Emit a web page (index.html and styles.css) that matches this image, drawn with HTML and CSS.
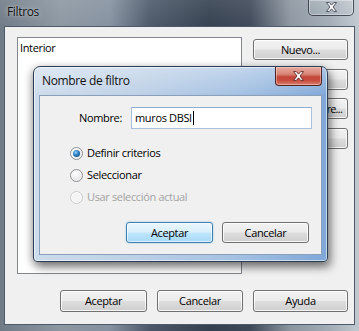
FILE: index.html
```html
<!DOCTYPE html>
<html>
<head>
<meta charset="utf-8">
<link rel="stylesheet" href="styles.css">
</head>
<body>
<div class="window">
  <div class="titlebar">
    <span class="title">Filtros</span>
    <div class="close-outer">
      <svg class="x" width="13" height="10" viewBox="0 0 10 9"><polygon points="0.5,0.5 3,0.5 5,2.8 7,0.5 9.5,0.5 6.4,4.5 9.5,8.5 7,8.5 5,6.2 3,8.5 0.5,8.5 3.6,4.5" fill="#fff" stroke="#3b4250" stroke-width="0.8" stroke-linejoin="round"/></svg>
    </div>
  </div>
  <div class="client">
    <div class="main">
      <div class="listbox"><div class="item">Interior</div></div>
      <div class="side">
        <button class="btn">Nuevo...</button>
        <button class="btn">Duplicar</button>
        <button class="btn"><span class="tight">Cambiar nombre...</span></button>
        <button class="btn">Suprimir</button>
      </div>
    </div>
    <div class="footer">
      <button class="btn w87">Aceptar</button>
      <button class="btn w86">Cancelar</button>
      <button class="btn w95">Ayuda</button>
    </div>
  </div>
</div>

<div class="dialog">
  <div class="dtitle">
    <span class="dtitle-text">Nombre de filtro</span>
    <div class="close-red">
      <svg class="x" width="11" height="10" viewBox="0 0 10 9"><polygon points="0.5,0.5 3,0.5 5,2.8 7,0.5 9.5,0.5 6.4,4.5 9.5,8.5 7,8.5 5,6.2 3,8.5 0.5,8.5 3.6,4.5" fill="#fff" stroke="#5a2020" stroke-width="0.8" stroke-linejoin="round"/></svg>
    </div>
  </div>
  <div class="dclient">
    <div class="namerow">
      <label class="lbl">Nombre:</label>
      <div class="input">muros DBSI<span class="caret"></span></div>
    </div>
    <div class="radios">
      <div class="radio-row"><span class="radio checked"></span><span>Definir criterios</span></div>
      <div class="radio-row"><span class="radio"></span><span>Seleccionar</span></div>
      <div class="radio-row disabled"><span class="radio"></span><span>Usar selección actual</span></div>
    </div>
    <div class="dbuttons">
      <button class="btn default w87">Aceptar</button>
      <button class="btn w87">Cancelar</button>
    </div>
  </div>
</div>
</body>
</html>
```

FILE: styles.css
```css
html, body {
  margin: 0;
  padding: 0;
}
body {
  width: 359px;
  height: 331px;
  overflow: hidden;
  position: relative;
  font-family: "Open Sans", "Noto Sans", sans-serif;
  font-size: 11px;
  letter-spacing: -0.35px;
  color: #000;
  background:
    linear-gradient(to bottom, rgba(255,255,255,0.10), rgba(0,0,0,0) 30px),
    linear-gradient(to right, #6f7b87 0px, #8c97a2 60px, #8591a0 110px, #4c5869 150px, #34404f 210px, #3d4858 250px, #8b959f 290px, #a3adb7 330px, #c1c9d0 359px);
}
.window {
  width: 359px;
  height: 331px;
  display: flex;
  flex-direction: column;
}
.titlebar {
  height: 26px;
  display: flex;
  justify-content: space-between;
  align-items: flex-start;
  flex: none;
}
.title {
  margin-left: 7px;
  margin-top: 5px;
  font-size: 12px;
  line-height: 14px;
  color: #111;
  text-shadow: 0 0 6px rgba(255,255,255,0.55), 0 0 2px rgba(255,255,255,0.4);
}
.close-outer {
  width: 44px;
  height: 15px;
  margin-right: 5px;
  border: 1px solid rgba(20,28,40,0.7);
  border-top: none;
  border-radius: 0 0 5px 5px;
  box-shadow: inset 0 0 0 1px rgba(255,255,255,0.35);
  background: linear-gradient(to bottom, rgba(255,255,255,0.10), rgba(255,255,255,0.02));
  display: flex;
  align-items: center;
  justify-content: center;
}
.close-outer .x {
  margin-top: -1px;
}
.client {
  margin: 0 4px;
  height: 297px;
  border: 1px solid #4d5a6a;
  background: #f0f0f0;
  display: flex;
  flex-direction: column;
  flex: none;
}
.main {
  display: flex;
  padding: 10px 0 0 12px;
  gap: 11px;
}
.listbox {
  width: 223px;
  height: 235px;
  border: 1px solid #828790;
  background: #fff;
}
.item {
  padding: 3px 0 0 2px;
  font-size: 11px;
  line-height: 14px;
}
.side {
  display: flex;
  flex-direction: column;
  gap: 8.6px;
  padding-top: 2px;
}
.side .btn {
  width: 95px;
}
.btn {
  height: 21px;
  padding: 0;
  border: 1px solid #707070;
  border-radius: 3px;
  background: linear-gradient(to bottom, #f2f2f2 0%, #ebebeb 48%, #dddddd 52%, #cfcfcf 100%);
  box-shadow: inset 0 0 0 1px rgba(255,255,255,0.8);
  font-family: "Open Sans", "Noto Sans", sans-serif;
  font-size: 11px;
  letter-spacing: -0.35px;
  color: #000;
  line-height: 18px;
  white-space: nowrap;
}
.tight {
  letter-spacing: -0.75px;
}
.w87 { width: 87px; }
.w86 { width: 86px; }
.w95 { width: 95px; }
.footer {
  display: flex;
  justify-content: flex-end;
  gap: 10px;
  padding-right: 6px;
  margin-top: 16px;
}
.footer .btn {
  height: 22px;
}

/* Inner dialog (overlays the main window) */
.dialog {
  position: absolute;
  left: 33px;
  top: 66px;
  width: 293px;
  height: 194px;
  border: 1px solid #2b3e55;
  border-radius: 7px 7px 4px 4px;
  background:
    linear-gradient(to bottom, rgba(255,255,255,0.35), rgba(255,255,255,0.05) 26px, rgba(255,255,255,0) 28px),
    linear-gradient(to right, #cddcec 0%, #bcd0e6 35%, #a3c0e2 70%, #7fa7d8 100%);
  box-shadow: inset 0 0 0 1px rgba(255,255,255,0.55), 3px 5px 10px rgba(0,0,0,0.45), -2px 2px 8px rgba(0,0,0,0.25);
  display: flex;
  flex-direction: column;
}
.dtitle {
  height: 28px;
  display: flex;
  justify-content: space-between;
  align-items: flex-start;
  flex: none;
}
.dtitle-text {
  margin-left: 8px;
  margin-top: 7px;
  font-size: 12px;
  line-height: 14px;
  color: #111;
}
.close-red {
  width: 45px;
  height: 18px;
  margin-right: 5px;
  border: 1px solid #4f2424;
  border-top: none;
  border-radius: 0 0 4px 4px;
  background: linear-gradient(to bottom, #e6aa9f 0%, #d88576 40%, #c2463a 55%, #c84d40 75%, #d9806f 100%);
  box-shadow: inset 0 0 0 1px rgba(255,220,210,0.45);
  display: flex;
  align-items: center;
  justify-content: center;
}
.dclient {
  margin: 0 5px 6px 5px;
  border: 1px solid #8aa0ba;
  background: #f0f0f0;
  display: flex;
  flex-direction: column;
  padding-top: 11px;
  box-sizing: border-box;
  height: 160px;
}
.namerow {
  display: flex;
  align-items: center;
  height: 22px;
}
.lbl {
  width: 82px;
  text-align: right;
  margin-right: 9px;
  line-height: 14px;
}
.input {
  width: 176px;
  height: 20px;
  border: 1px solid #a7c1dc;
  border-top-color: #8fadce;
  background: #fff;
  padding-left: 3px;
  box-sizing: content-box;
  line-height: 20px;
  display: flex;
  align-items: center;
}
.caret {
  display: inline-block;
  width: 1px;
  height: 14px;
  background: #000;
  margin-left: 1px;
}
.radios {
  margin-top: 13px;
  display: flex;
  flex-direction: column;
}
.radio-row {
  height: 22px;
  display: flex;
  align-items: center;
  padding-left: 30px;
  gap: 4px;
  line-height: 14px;
}
.radio {
  width: 11px;
  height: 11px;
  border-radius: 50%;
  border: 1px solid #8c8f94;
  background: radial-gradient(circle at 40% 35%, #ffffff 0%, #f0f0f0 40%, #d4d6d9 100%);
  box-shadow: inset 0 0 0 1px rgba(255,255,255,0.7);
  position: relative;
  flex: none;
}
.radio.checked::after {
  content: "";
  position: absolute;
  left: 2px;
  top: 2px;
  width: 7px;
  height: 7px;
  border-radius: 50%;
  background: radial-gradient(circle at 40% 35%, #8fd0f5 0%, #2a7bc0 45%, #123f72 100%);
}
.disabled {
  color: #a3a3a3;
}
.disabled .radio {
  border-color: #c9cbcd;
  background: #f4f4f4;
}
.dbuttons {
  margin-top: 14px;
  display: flex;
  justify-content: flex-end;
  gap: 9px;
  padding-right: 12px;
}
.btn.default {
  border-color: #3c7fb1;
  background: linear-gradient(to bottom, #eaf6fd 0%, #d9f0fc 48%, #bee6fd 52%, #a7d9f5 100%);
  box-shadow: inset 0 0 0 1px rgba(255,255,255,0.6), 0 0 2px rgba(60,160,220,0.5);
}
```
